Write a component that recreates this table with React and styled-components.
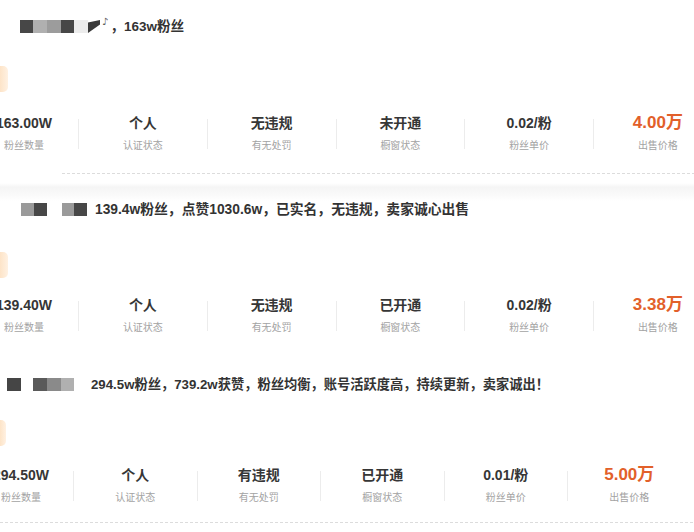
import React from "react";
import styled, { createGlobalStyle } from "styled-components";

const Global = createGlobalStyle`
  html, body { margin: 0; padding: 0; background: #fff; overflow: hidden; }
  body { font-family: "Liberation Sans", "Noto Sans CJK SC", sans-serif; color: #333; }
`;

const Page = styled.div`
  width: 694px;
  height: 532px;
  overflow: hidden;
  display: flex;
  flex-direction: column;
  background: #fff;
`;

const Card = styled.section`
  display: flex;
  flex-direction: column;
  padding-top: ${(p) => p.$top}px;
  background: ${(p) =>
    p.$shade
      ? "linear-gradient(to bottom, #fff 0px, #fff 9px, #f5f5f5 13px, #f9f9f9 20px, #fff 27px)"
      : "#fff"};
`;

const TitleRow = styled.div`
  display: flex;
  align-items: center;
  height: 20px;
  padding-left: ${(p) => p.$indent}px;
  font-size: ${(p) => p.$size}px;
  font-weight: 700;
  color: #333;
  white-space: nowrap;
`;

const Mosaic = styled.div`
  display: flex;
  align-items: center;
  margin-top: ${(p) => p.$dy || 0}px;
  margin-right: ${(p) => p.$gap}px;
`;

const Pixel = styled.span`
  display: block;
  width: ${(p) => p.$w}px;
  height: 13px;
  background: ${(p) => p.$c};
`;

const Wedge = styled.span`
  display: block;
  width: 12px;
  height: 13px;
  background: #3a3a3a;
  clip-path: polygon(0 20%, 100% 0, 100% 35%, 0 100%);
`;

const Note = styled.span`
  font-family: "DejaVu Sans", sans-serif;
  font-size: 10px;
  font-weight: 400;
  color: #555;
  margin: -8px 2px 0 2px;
`;

const Tag = styled.div`
  width: ${(p) => p.$w}px;
  height: 26px;
  margin-top: ${(p) => p.$top}px;
  border-radius: 0 5px 5px 0;
  background: linear-gradient(to right, #fde4c8, #fff1e2);
`;

const StatsRow = styled.div`
  display: flex;
  align-items: center;
  margin-top: ${(p) => p.$top}px;
`;

const Stat = styled.div`
  flex: none;
  width: ${(p) => p.$w}px;
  box-sizing: border-box;
  padding-right: ${(p) => p.$pr || 0}px;
  display: flex;
  flex-direction: column;
  align-items: center;
  white-space: nowrap;
`;

const Value = styled.div`
  height: 20px;
  line-height: 20px;
  font-size: ${(p) => (p.$price ? 17 : 14)}px;
  font-weight: 700;
  color: ${(p) => (p.$price ? "#e2602a" : "#363636")};
`;

const Label = styled.div`
  margin-top: 5px;
  height: 16px;
  line-height: 16px;
  font-size: 10px;
  color: #a3a3a3;
`;

const VDivider = styled.div`
  flex: none;
  width: 1px;
  height: 30px;
  background: #ececec;
`;

const Dotted = styled.div`
  margin-top: ${(p) => p.$top}px;
  margin-left: ${(p) => p.$left}px;
  height: 1px;
  background-image: repeating-linear-gradient(
    to right,
    #dcdcdc 0,
    #dcdcdc 3px,
    transparent 3px,
    transparent 5px
  );
`;

const cards = [
  {
    top: 15,
    indent: 20,
    size: 13.5,
    mosaics: [
      {
        gap: 0,
        blocks: [
          ["#474747", 13],
          ["#b0b0b0", 14],
          ["#9c9c9c", 14],
          ["#474747", 13],
          ["#ececec", 14],
        ],
        wedge: true,
      },
    ],
    note: true,
    text: "，163w粉丝",
    tagTop: 31,
    tagW: 8,
    statsTop: 21,
    first: 78,
    firstPad: 30,
    col: 128.75,
    stats: [
      ["163.00W", "粉丝数量"],
      ["个人", "认证状态"],
      ["无违规", "有无处罚"],
      ["未开通", "橱窗状态"],
      ["0.02/粉", "粉丝单价"],
      ["4.00万", "出售价格"],
    ],
    dotted: { top: 19, left: 62 },
  },
  {
    top: 24,
    shade: true,
    indent: 21,
    size: 13.8,
    mosaics: [
      { gap: 15, blocks: [["#9a9a9a", 13], ["#474747", 13]] },
      { gap: 8, blocks: [["#9a9a9a", 12], ["#474747", 13]] },
    ],
    text: "139.4w粉丝，点赞1030.6w，已实名，无违规，卖家诚心出售",
    tagTop: 34,
    tagW: 8,
    statsTop: 17,
    first: 78,
    firstPad: 30,
    col: 128.75,
    stats: [
      ["139.40W", "粉丝数量"],
      ["个人", "认证状态"],
      ["无违规", "有无处罚"],
      ["已开通", "橱窗状态"],
      ["0.02/粉", "粉丝单价"],
      ["3.38万", "出售价格"],
    ],
  },
  {
    top: 37,
    indent: 7,
    size: 13.25,
    mosaics: [
      { gap: 12, blocks: [["#454545", 14]] },
      { gap: 17, blocks: [["#5a5a5a", 14], ["#8a8a8a", 14], ["#b0b0b0", 13]] },
    ],
    text: "294.5w粉丝，739.2w获赞，粉丝均衡，账号活跃度高，持续更新，卖家诚出！",
    tagTop: 27,
    tagW: 6,
    statsTop: 19,
    first: 73,
    firstPad: 31,
    col: 123.5,
    stats: [
      ["294.50W", "粉丝数量"],
      ["个人", "认证状态"],
      ["有违规", "有无处罚"],
      ["已开通", "橱窗状态"],
      ["0.01/粉", "粉丝单价"],
      ["5.00万", "出售价格"],
    ],
    dotted: { top: 16, left: 0 },
  },
];

function ListingCard({ c }) {
  return (
    <Card $top={c.top} $shade={c.shade}>
      <TitleRow $indent={c.indent} $size={c.size}>
        {c.mosaics.map((m, i) => (
          <Mosaic key={i} $gap={m.gap} $dy={3}>
            {m.blocks.map(([col, w], j) => (
              <Pixel key={j} $c={col} $w={w} />
            ))}
            {m.wedge && <Wedge />}
          </Mosaic>
        ))}
        {c.note && <Note>♪</Note>}
        <span>{c.text}</span>
      </TitleRow>
      <Tag $top={c.tagTop} $w={c.tagW} />
      <StatsRow $top={c.statsTop}>
        {c.stats.map(([v, l], i) => (
          <React.Fragment key={i}>
            {i > 0 && <VDivider />}
            <Stat
              $w={i === 0 ? c.first : c.col - 1}
              $pr={i === 0 ? c.firstPad : 0}
            >
              <Value $price={i === 5}>{v}</Value>
              <Label>{l}</Label>
            </Stat>
          </React.Fragment>
        ))}
      </StatsRow>
      {c.dotted && <Dotted $top={c.dotted.top} $left={c.dotted.left} />}
    </Card>
  );
}

export default function App() {
  return (
    <Page>
      <Global />
      {cards.map((c, i) => (
        <ListingCard key={i} c={c} />
      ))}
    </Page>
  );
}
